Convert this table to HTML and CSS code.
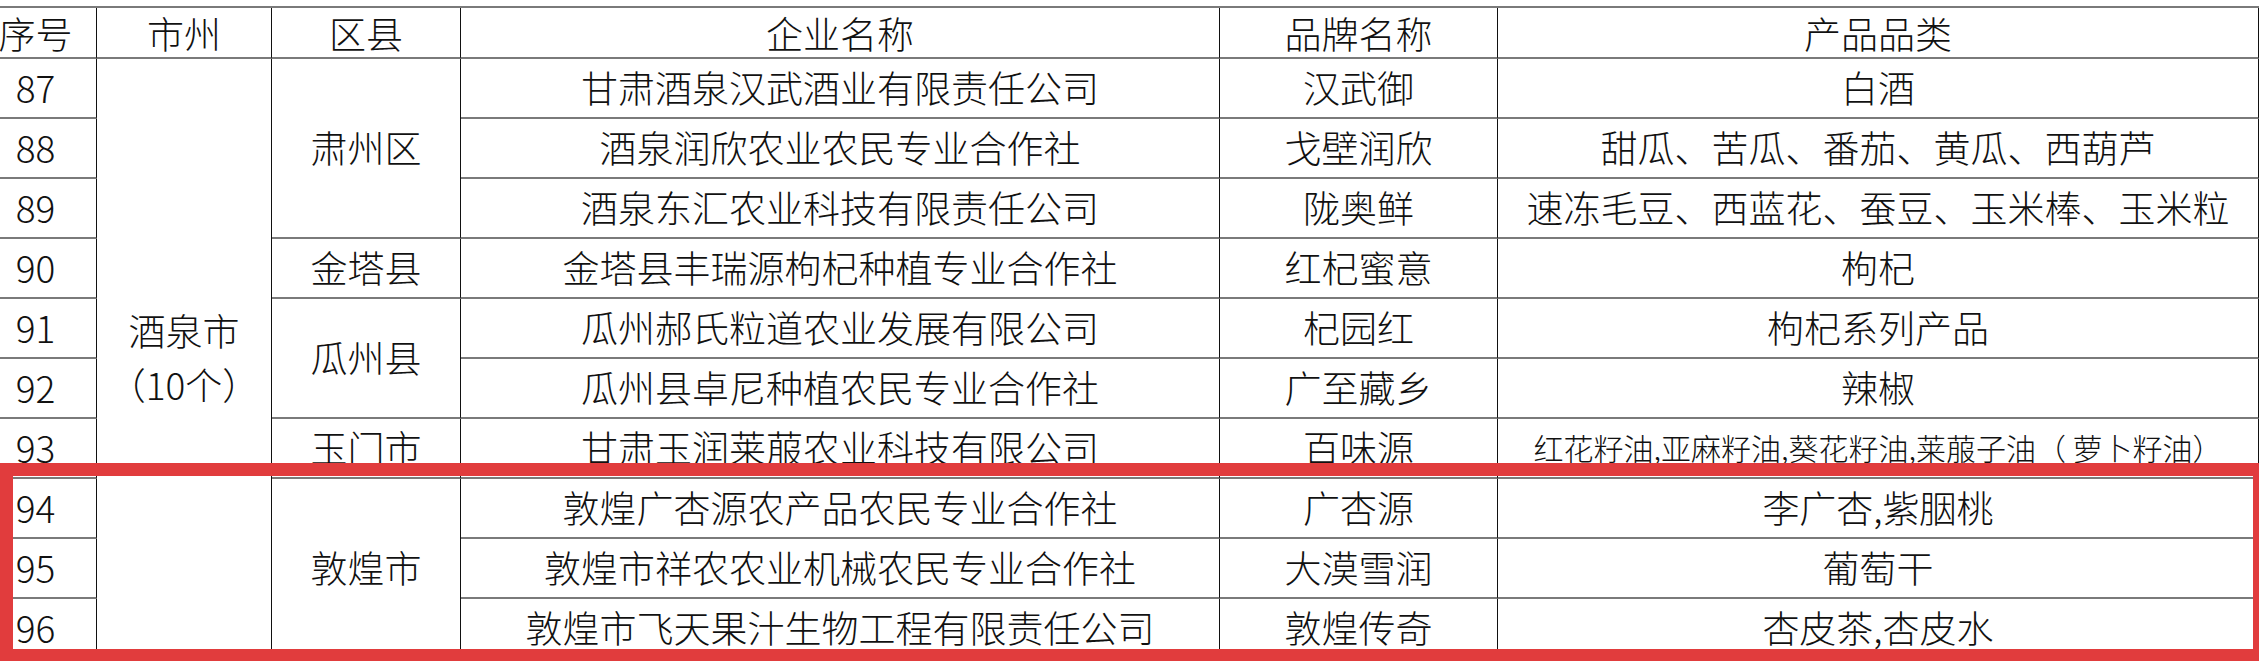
FILE: index.html
```html
<!DOCTYPE html>
<html lang="zh-CN">
<head>
<meta charset="utf-8">
<title>企业品牌目录</title>
<link rel="stylesheet" href="styles.css">
</head>
<body>
<div class="page">
  <div class="sheet">
    <div class="cell head">序号</div>
    <div class="cell head">市州</div>
    <div class="cell head">区县</div>
    <div class="cell head">企业名称</div>
    <div class="cell head">品牌名称</div>
    <div class="cell head">产品品类</div>

    <div class="cell">87</div>
    <div class="cell span10">酒泉市<br>（10个）</div>
    <div class="cell span3">肃州区</div>
    <div class="cell">甘肃酒泉汉武酒业有限责任公司</div>
    <div class="cell">汉武御</div>
    <div class="cell">白酒</div>

    <div class="cell">88</div>
    <div class="cell">酒泉润欣农业农民专业合作社</div>
    <div class="cell">戈壁润欣</div>
    <div class="cell">甜瓜、苦瓜、番茄、黄瓜、西葫芦</div>

    <div class="cell">89</div>
    <div class="cell">酒泉东汇农业科技有限责任公司</div>
    <div class="cell">陇奥鲜</div>
    <div class="cell">速冻毛豆、西蓝花、蚕豆、玉米棒、玉米粒</div>

    <div class="cell">90</div>
    <div class="cell">金塔县</div>
    <div class="cell">金塔县丰瑞源枸杞种植专业合作社</div>
    <div class="cell">红杞蜜意</div>
    <div class="cell">枸杞</div>

    <div class="cell">91</div>
    <div class="cell span2">瓜州县</div>
    <div class="cell">瓜州郝氏粒道农业发展有限公司</div>
    <div class="cell">杞园红</div>
    <div class="cell">枸杞系列产品</div>

    <div class="cell">92</div>
    <div class="cell">瓜州县卓尼种植农民专业合作社</div>
    <div class="cell">广至藏乡</div>
    <div class="cell">辣椒</div>

    <div class="cell">93</div>
    <div class="cell">玉门市</div>
    <div class="cell">甘肃玉润莱菔农业科技有限公司</div>
    <div class="cell">百味源</div>
    <div class="cell small">红花籽油,亚麻籽油,葵花籽油,莱菔子油（ 萝卜籽油）</div>

    <div class="cell">94</div>
    <div class="cell span3">敦煌市</div>
    <div class="cell">敦煌广杏源农产品农民专业合作社</div>
    <div class="cell">广杏源</div>
    <div class="cell">李广杏,紫胭桃</div>

    <div class="cell">95</div>
    <div class="cell">敦煌市祥农农业机械农民专业合作社</div>
    <div class="cell">大漠雪润</div>
    <div class="cell">葡萄干</div>

    <div class="cell">96</div>
    <div class="cell">敦煌市飞天果汁生物工程有限责任公司</div>
    <div class="cell">敦煌传奇</div>
    <div class="cell">杏皮茶,杏皮水</div>
  </div>
  <div class="highlight"></div>
</div>
</body>
</html>
```

FILE: styles.css
```css
html, body {
  margin: 0;
  padding: 0;
  background: #ffffff;
  overflow: hidden;
}

.page {
  position: relative;
  width: 2259px;
  height: 661px;
  overflow: hidden;
}

.sheet {
  display: grid;
  grid-template-columns: 122px 175px 189px 759px 278px 761px;
  grid-template-rows: 51px repeat(10, 60px);
  width: 2284px;
  margin: 6px 0 0 -25px;
  border-top: 2px solid #7a7a7a;
  font-family: "Noto Sans CJK SC", "Noto Sans", sans-serif;
  font-size: 37px;
  font-weight: 300;
  color: #111111;
}

.cell {
  box-sizing: border-box;
  display: flex;
  align-items: center;
  justify-content: center;
  text-align: center;
  border-right: 1px solid #111111;
  border-bottom: 2px solid #7a7a7a;
  line-height: 1.45;
  white-space: nowrap;
}

.head {
  padding-top: 2px;
}

.span2 { grid-row: span 2; }
.span3 { grid-row: span 3; }
.span10 { grid-row: span 10; }

.small {
  font-size: 30px;
}

.highlight {
  position: absolute;
  left: 0;
  top: 463px;
  width: 2266px;
  height: 199px;
  box-sizing: border-box;
  border: 13px solid #e13c3d;
}
```
